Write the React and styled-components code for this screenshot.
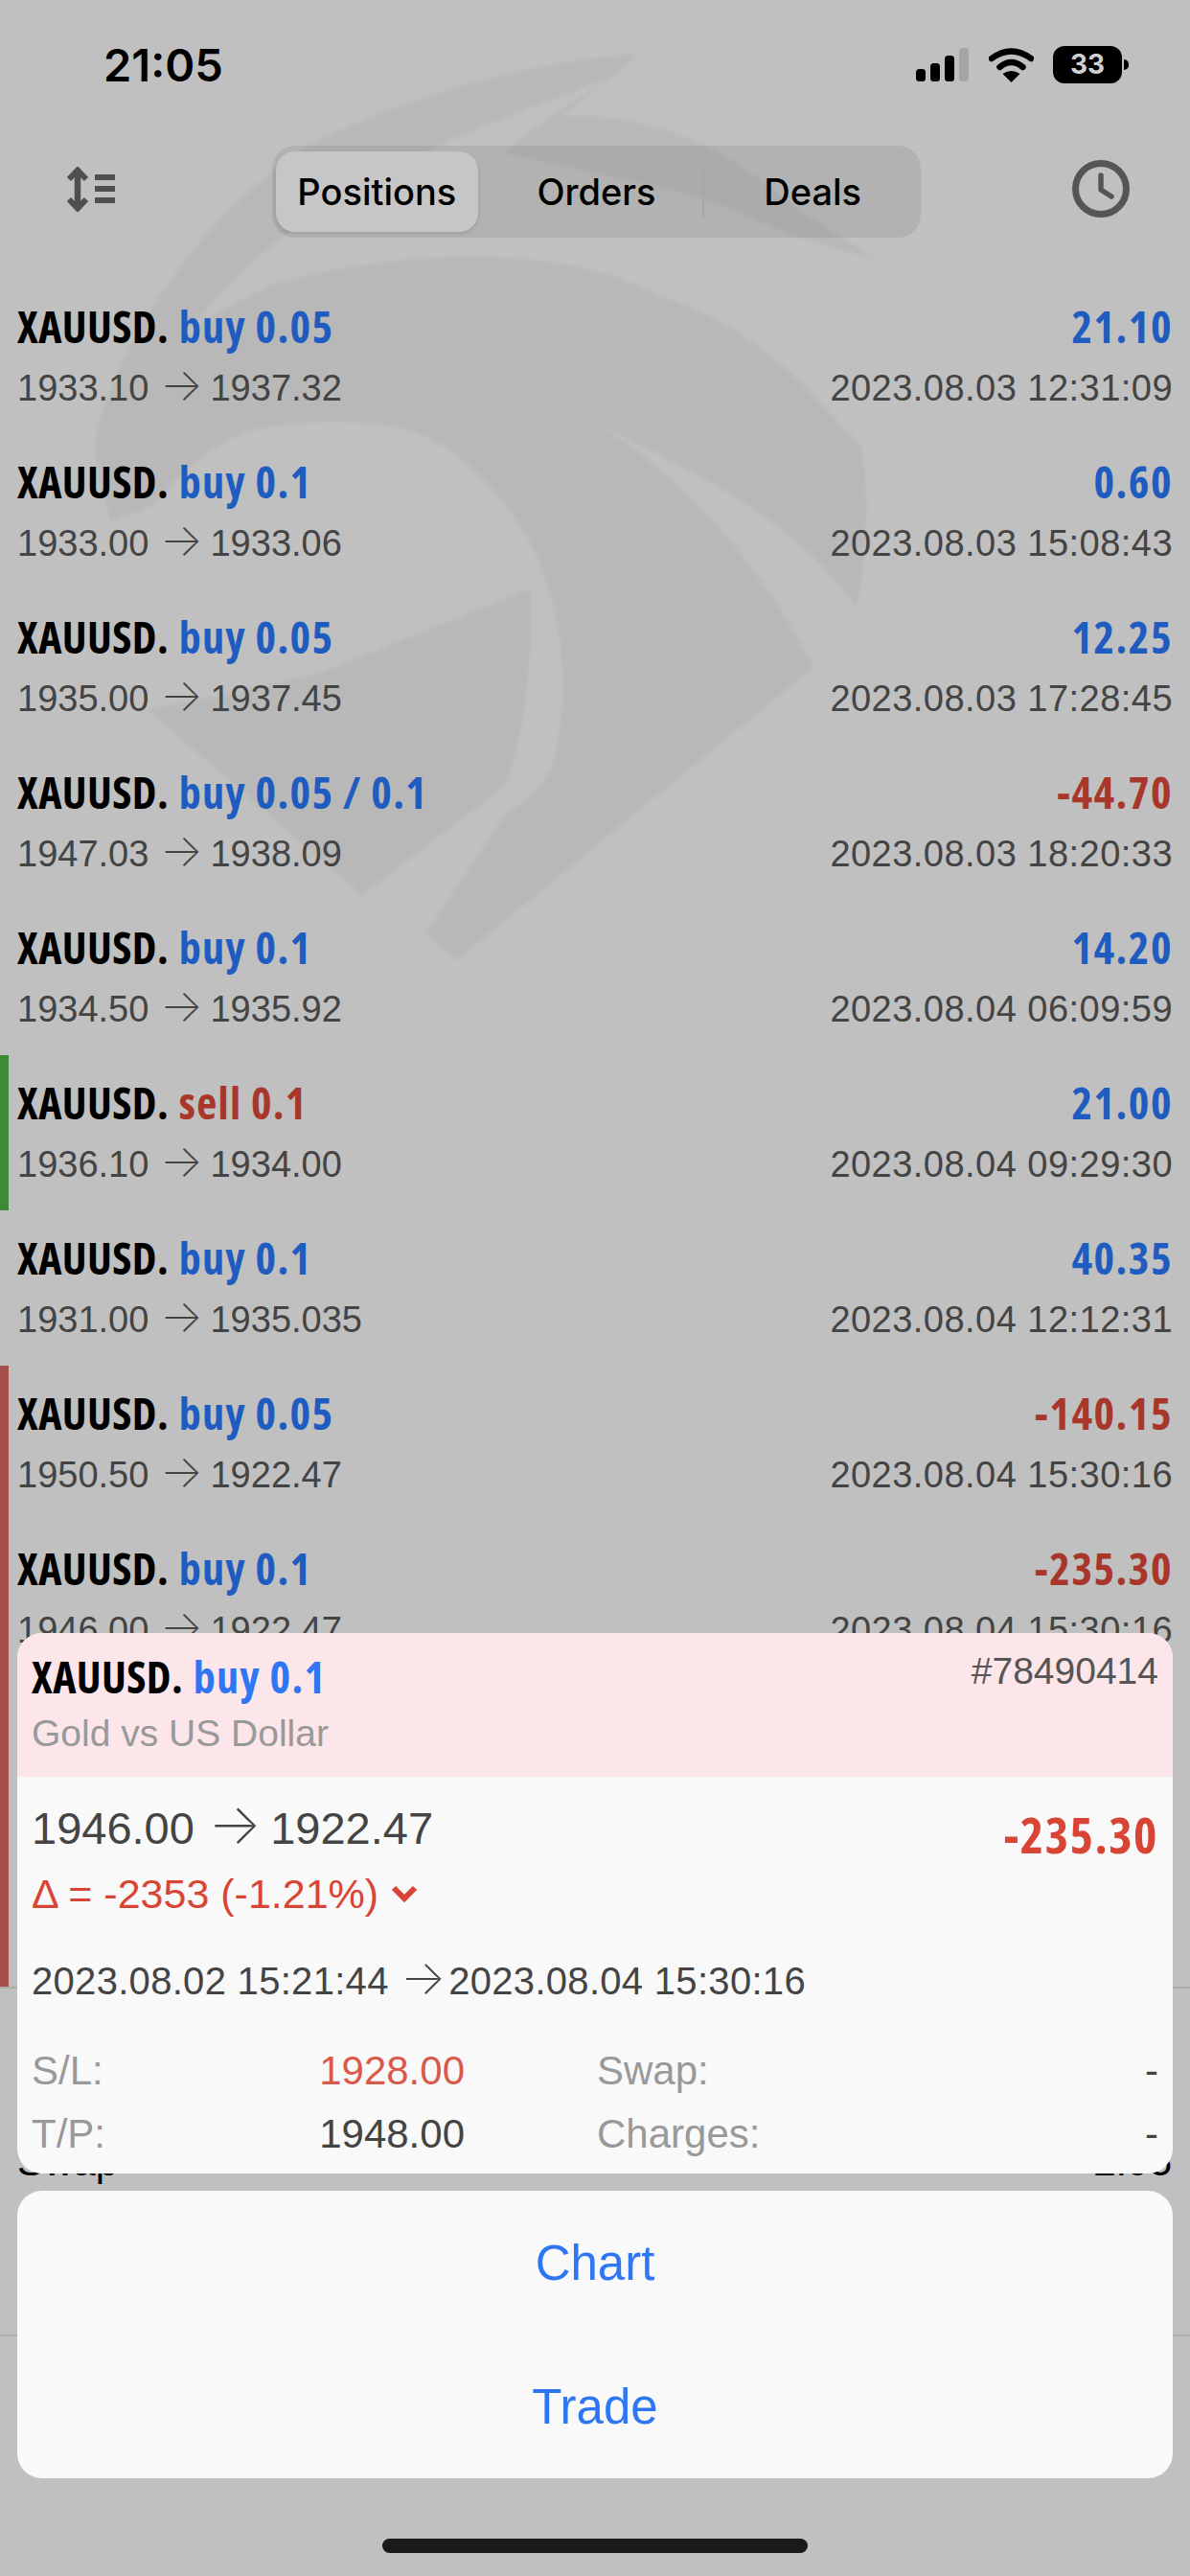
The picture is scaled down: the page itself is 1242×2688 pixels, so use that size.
import React from "react";
import styled, { createGlobalStyle, css } from "styled-components";

const GlobalStyle = createGlobalStyle`
  html, body {
    margin: 0;
    padding: 0;
    background: #c0c0c0;
  }
`;

const sans = `"Liberation Sans", Arial, sans-serif`;

const condensed = css`
  font-family: "Open Sans", "Liberation Sans Narrow", sans-serif;
  font-stretch: 75%;
  font-weight: 700;
`;

const Page = styled.div`
  position: relative;
  width: 1242px;
  height: 2688px;
  overflow: hidden;
  background: #c0c0c0;
  font-family: ${sans};
`;

const Watermark = styled.svg`
  position: absolute;
  left: 0;
  top: 0;
  width: 1242px;
  height: 1100px;
  fill: #b8b8b8;
  filter: blur(1.5px);
`;

const Content = styled.div`
  position: relative;
`;

const StatusBar = styled.div`
  height: 130px;
  display: flex;
  align-items: flex-start;
  padding: 43px 71px 0 108px;
  box-sizing: border-box;
`;

const Clock = styled.div`
  font-family: Inter, sans-serif;
  font-size: 47px;
  font-weight: 600;
  line-height: 50px;
  color: #000;
`;

const StatusIcons = styled.div`
  margin-left: auto;
  display: flex;
  align-items: flex-start;
  padding-top: 5px;
`;

const SignalIcon = styled.svg`
  margin-top: 2px;
`;

const WifiIcon = styled.svg`
  margin: 1px 0 0 20px;
`;

const Battery = styled.div`
  position: relative;
  width: 72px;
  height: 39px;
  margin-left: 20px;
  border-radius: 12px;
  background: #000;
  color: #d0d0d0;
  font-family: Inter, sans-serif;
  font-size: 28px;
  font-weight: 700;
  line-height: 39px;
  text-align: center;

  &::after {
    content: "";
    position: absolute;
    left: 74px;
    top: 14px;
    width: 5px;
    height: 11px;
    border-radius: 0 6px 6px 0;
    background: #000;
  }
`;

const Toolbar = styled.div`
  height: 161px;
  display: grid;
  grid-template-columns: 284px 677px 1fr;
  align-items: start;
`;

const SortButton = styled.div`
  padding: 44px 0 0 69px;
  line-height: 0;
`;

const HistoryButton = styled.div`
  justify-self: end;
  padding: 37px 63px 0 0;
  line-height: 0;
`;

const Segments = styled.div`
  position: relative;
  margin-top: 22px;
  height: 96px;
  display: grid;
  grid-template-columns: repeat(3, 1fr);
  border-radius: 24px;
  background: rgba(0, 0, 0, 0.07);
`;

const Segment = styled.div`
  display: flex;
  align-items: center;
  justify-content: center;
  font-family: Inter, sans-serif;
  font-size: 38px;
  font-weight: 500;
  color: #000;
  ${(p) =>
    p.$active &&
    css`
      margin: 6px 11px 6px 4px;
      border-radius: 20px;
      background: #c6c6c6;
      box-shadow: 0 2px 4px rgba(0, 0, 0, 0.12);
    `}
  ${(p) =>
    p.$divided &&
    css`
      position: relative;
      &::after {
        content: "";
        position: absolute;
        right: 0;
        top: 21px;
        bottom: 21px;
        width: 2px;
        background: #a6a6a6;
      }
    `}
`;

const List = styled.div`
  display: flex;
  flex-direction: column;
`;

const Row = styled.div`
  height: 162px;
  box-sizing: border-box;
  padding: 26px 18px 0 9px;
  border-left: 9px solid ${(p) => p.$bar || "transparent"};
`;

const Line = styled.div`
  display: flex;
  justify-content: space-between;
  align-items: baseline;
`;

const TitleLine = styled(Line)`
  height: 46px;
  line-height: 46px;
`;

const SubLine = styled(Line)`
  margin-top: 19px;
  height: 46px;
  line-height: 46px;
  font-size: 38px;
  color: #444;
`;

const Title = styled.div`
  ${condensed}
  font-size: 46px;
  letter-spacing: 0.4px;
  color: #000;
  white-space: nowrap;
`;

const Side = styled.span`
  margin-left: 2px;
  letter-spacing: 1.3px;
  color: ${(p) => (p.$sell ? "#a8362a" : p.$bright ? "#2f76f5" : "#1f5cc0")};
`;

const Amount = styled.div`
  ${condensed}
  font-size: 46px;
  letter-spacing: 1.5px;
  color: ${(p) => (p.$loss ? "#a8362a" : "#1f5cc0")};
`;

const Arrow = styled.span`
  display: inline-block;
  width: 0.75em;
  margin: 0 0.36em 0 0.24em;
  text-align: left;
  font-family: Inter, sans-serif;
  font-size: 1.25em;
  font-weight: 200;
  line-height: 0.7;
`;

const DateText = styled.span`
  letter-spacing: 0.47px;
`;

const CoveredRows = styled.div`
  height: 324px;
  border-left: 9px solid #a5514b;
`;

const Summary = styled.div`
  height: 365px;
  box-sizing: border-box;
  border-top: 2px solid #adadad;
  border-bottom: 2px solid #adadad;
  padding: 156px 19px 0 18px;
`;

const SummaryRow = styled(Line)`
  font-size: 42px;
  line-height: 50px;
  color: #000;
`;

const Sheet = styled.div`
  position: absolute;
  left: 18px;
  right: 18px;
  top: 1704px;
  display: flex;
  flex-direction: column;
  gap: 18px;
`;

const DetailCard = styled.div`
  height: 564px;
  border-radius: 26px;
  overflow: hidden;
  background: #f9f9f9;
`;

const DetailHeader = styled.div`
  height: 150px;
  box-sizing: border-box;
  padding: 22px 15px 0;
  background: #fde6e9;
  display: flex;
  justify-content: space-between;
  align-items: flex-start;
`;

const DetailTitle = styled(Title)`
  line-height: 46px;
`;

const Instrument = styled.div`
  margin-top: 14px;
  font-size: 39px;
  line-height: 46px;
  color: #999;
`;

const OrderId = styled.div`
  margin-top: -5px;
  font-size: 39px;
  line-height: 46px;
  color: #555;
`;

const DetailBody = styled.div`
  padding: 24px 15px 0;
  color: #444;
`;

const PriceLine = styled.div`
  display: flex;
  justify-content: space-between;
  align-items: flex-start;
  height: 60px;
  line-height: 60px;
  font-size: 47px;
`;

const BigAmount = styled.div`
  ${condensed}
  font-size: 52px;
  letter-spacing: 1.5px;
  margin-top: 6px;
  color: #d94535;
`;

const Delta = styled.div`
  margin-top: 15px;
  display: flex;
  align-items: center;
  gap: 13px;
  height: 46px;
  font-size: 43px;
  line-height: 46px;
  color: #d94535;
`;

const TimeSpan = styled.div`
  margin-top: 45px;
  font-size: 40px;
  letter-spacing: 0.3px;
  line-height: 46px;

  ${Arrow} {
    margin: 0 0.26em 0 0.24em;
  }
`;

const Stats = styled.div`
  margin-top: 38px;
  display: grid;
  grid-template-columns: 452px 586px;
  justify-content: space-between;
  grid-auto-rows: 66px;
`;

const Stat = styled.div`
  display: flex;
  justify-content: space-between;
  align-items: center;
  font-size: 42px;
`;

const StatLabel = styled.span`
  color: #999;
`;

const StatValue = styled.span`
  color: ${(p) => (p.$alert ? "#d9594a" : "#444")};
`;

const ActionCard = styled.div`
  height: 300px;
  border-radius: 26px;
  overflow: hidden;
  background: #f9f9f9;
  display: grid;
  grid-template-rows: 1fr 1fr;
`;

const Action = styled.div`
  display: flex;
  align-items: center;
  justify-content: center;
  font-size: 51px;
  color: #2f76f5;
`;

const HomeIndicator = styled.div`
  position: absolute;
  left: 399px;
  top: 2649px;
  width: 444px;
  height: 15px;
  border-radius: 8px;
  background: #1a1a1a;
`;

const trades = [
  { side: "buy 0.05", profit: "21.10", from: "1933.10", to: "1937.32", time: "2023.08.03 12:31:09" },
  { side: "buy 0.1", profit: "0.60", from: "1933.00", to: "1933.06", time: "2023.08.03 15:08:43" },
  { side: "buy 0.05", profit: "12.25", from: "1935.00", to: "1937.45", time: "2023.08.03 17:28:45" },
  { side: "buy 0.05 / 0.1", profit: "-44.70", from: "1947.03", to: "1938.09", time: "2023.08.03 18:20:33" },
  { side: "buy 0.1", profit: "14.20", from: "1934.50", to: "1935.92", time: "2023.08.04 06:09:59" },
  { side: "sell 0.1", profit: "21.00", from: "1936.10", to: "1934.00", time: "2023.08.04 09:29:30", bar: "#3d8b37" },
  { side: "buy 0.1", profit: "40.35", from: "1931.00", to: "1935.035", time: "2023.08.04 12:12:31" },
  { side: "buy 0.05", profit: "-140.15", from: "1950.50", to: "1922.47", time: "2023.08.04 15:30:16", bar: "#a5514b" },
  { side: "buy 0.1", profit: "-235.30", from: "1946.00", to: "1922.47", time: "2023.08.04 15:30:16", bar: "#a5514b" },
];

function Logo() {
  return (
    <Watermark viewBox="0 0 1242 1100">
      <path d="M665,57 C560,62 430,100 334,146 C250,190 130,320 98,465 L115,545 L159,527 C200,480 240,450 279,446 C320,438 380,438 416,446 C480,460 540,530 564,590 C590,650 595,740 575,802 C560,830 540,840 526,852 L444,974 L477,1002 L849,696 C800,600 720,500 619,440 C720,490 830,540 893,634 C905,590 908,520 899,465 L827,390 C780,350 740,325 690,309 C640,285 600,275 553,271 C500,265 440,268 400,274 C350,280 310,288 277,300 L214,333 L185,365 C230,290 330,210 430,165 C480,140 560,110 640,80 Z" />
      <path d="M553,615 C556,690 548,770 526,821 L378,934 L153,740 C220,730 280,715 334,702 Z" />
      <path d="M650,70 L586,121 C650,120 730,130 827,215 L915,271 L827,246 C780,225 740,205 690,196 L526,159 C560,130 610,100 650,70 Z" />
    </Watermark>
  );
}

function Signal() {
  return (
    <SignalIcon width="56" height="36" viewBox="0 0 56 36">
      <rect x="0" y="22" width="10" height="13" rx="3.5" fill="#000" />
      <rect x="15" y="16" width="10" height="19" rx="3.5" fill="#000" />
      <rect x="30" y="8" width="10" height="27" rx="3.5" fill="#000" />
      <rect x="45" y="0" width="10" height="35" rx="3.5" fill="#a5a5a5" />
    </SignalIcon>
  );
}

function Wifi() {
  return (
    <WifiIcon width="47" height="37" viewBox="0 0 47 37">
      <path d="M3,12 Q23.5,-3 44,12" fill="none" stroke="#000" strokeWidth="6.5" strokeLinecap="round" />
      <path d="M11.5,21 Q23.5,11 35.5,21" fill="none" stroke="#000" strokeWidth="6.5" strokeLinecap="round" />
      <path d="M23.5,37 L14.5,28 Q23.5,22 32.5,28 Z" fill="#000" />
    </WifiIcon>
  );
}

function SortIcon() {
  return (
    <svg width="51" height="47" viewBox="0 0 51 47" fill="none" stroke="#4f4f4f">
      <path d="M12,3 V44" strokeWidth="6.5" />
      <path d="M3,13 L12,3.5 L21,13" strokeWidth="6" />
      <path d="M3,34 L12,43.5 L21,34" strokeWidth="6" />
      <path d="M30,11 H51 M30,23 H51 M30,35 H51" strokeWidth="6" />
    </svg>
  );
}

function HistoryIcon() {
  return (
    <svg width="60" height="60" viewBox="0 0 60 60" fill="none" stroke="#555">
      <circle cx="30" cy="30" r="26.5" strokeWidth="7" />
      <path d="M30,16 V31 L41,38" strokeWidth="5.5" strokeLinecap="round" strokeLinejoin="round" />
    </svg>
  );
}

function Chevron() {
  return (
    <svg width="28" height="20" viewBox="0 0 28 20" fill="none" stroke="#d94535">
      <path d="M3,4 L14,15 L25,4" strokeWidth="6" />
    </svg>
  );
}

export default function App() {
  return (
    <Page>
      <GlobalStyle />
      <Logo />
      <Content>
        <StatusBar>
          <Clock>21:05</Clock>
          <StatusIcons>
            <Signal />
            <Wifi />
            <Battery>33</Battery>
          </StatusIcons>
        </StatusBar>
        <Toolbar>
          <SortButton>
            <SortIcon />
          </SortButton>
          <Segments>
            <Segment $active>Positions</Segment>
            <Segment $divided>Orders</Segment>
            <Segment>Deals</Segment>
          </Segments>
          <HistoryButton>
            <HistoryIcon />
          </HistoryButton>
        </Toolbar>
        <List>
          {trades.map((t, i) => (
            <Row key={i} $bar={t.bar}>
              <TitleLine>
                <Title>
                  XAUUSD. <Side $sell={t.side.startsWith("sell")}>{t.side}</Side>
                </Title>
                <Amount $loss={t.profit.startsWith("-")}>{t.profit}</Amount>
              </TitleLine>
              <SubLine>
                <span>
                  {t.from}
                  <Arrow>→</Arrow>
                  {t.to}
                </span>
                <DateText>{t.time}</DateText>
              </SubLine>
            </Row>
          ))}
          <CoveredRows />
        </List>
        <Summary>
          <SummaryRow>
            <span>Swap</span>
            <span>2.95</span>
          </SummaryRow>
        </Summary>
      </Content>
      <Sheet>
        <DetailCard>
          <DetailHeader>
            <div>
              <DetailTitle>
                XAUUSD. <Side $bright>buy 0.1</Side>
              </DetailTitle>
              <Instrument>Gold vs US Dollar</Instrument>
            </div>
            <OrderId>#78490414</OrderId>
          </DetailHeader>
          <DetailBody>
            <PriceLine>
              <span>
                1946.00
                <Arrow>→</Arrow>
                1922.47
              </span>
              <BigAmount>-235.30</BigAmount>
            </PriceLine>
            <Delta>
              <span>Δ = -2353 (-1.21%)</span>
              <Chevron />
            </Delta>
            <TimeSpan>
              2023.08.02 15:21:44
              <Arrow>→</Arrow>
              2023.08.04 15:30:16
            </TimeSpan>
            <Stats>
              <Stat>
                <StatLabel>S/L:</StatLabel>
                <StatValue $alert>1928.00</StatValue>
              </Stat>
              <Stat>
                <StatLabel>Swap:</StatLabel>
                <StatValue>-</StatValue>
              </Stat>
              <Stat>
                <StatLabel>T/P:</StatLabel>
                <StatValue>1948.00</StatValue>
              </Stat>
              <Stat>
                <StatLabel>Charges:</StatLabel>
                <StatValue>-</StatValue>
              </Stat>
            </Stats>
          </DetailBody>
        </DetailCard>
        <ActionCard>
          <Action>Chart</Action>
          <Action>Trade</Action>
        </ActionCard>
      </Sheet>
      <HomeIndicator />
    </Page>
  );
}
